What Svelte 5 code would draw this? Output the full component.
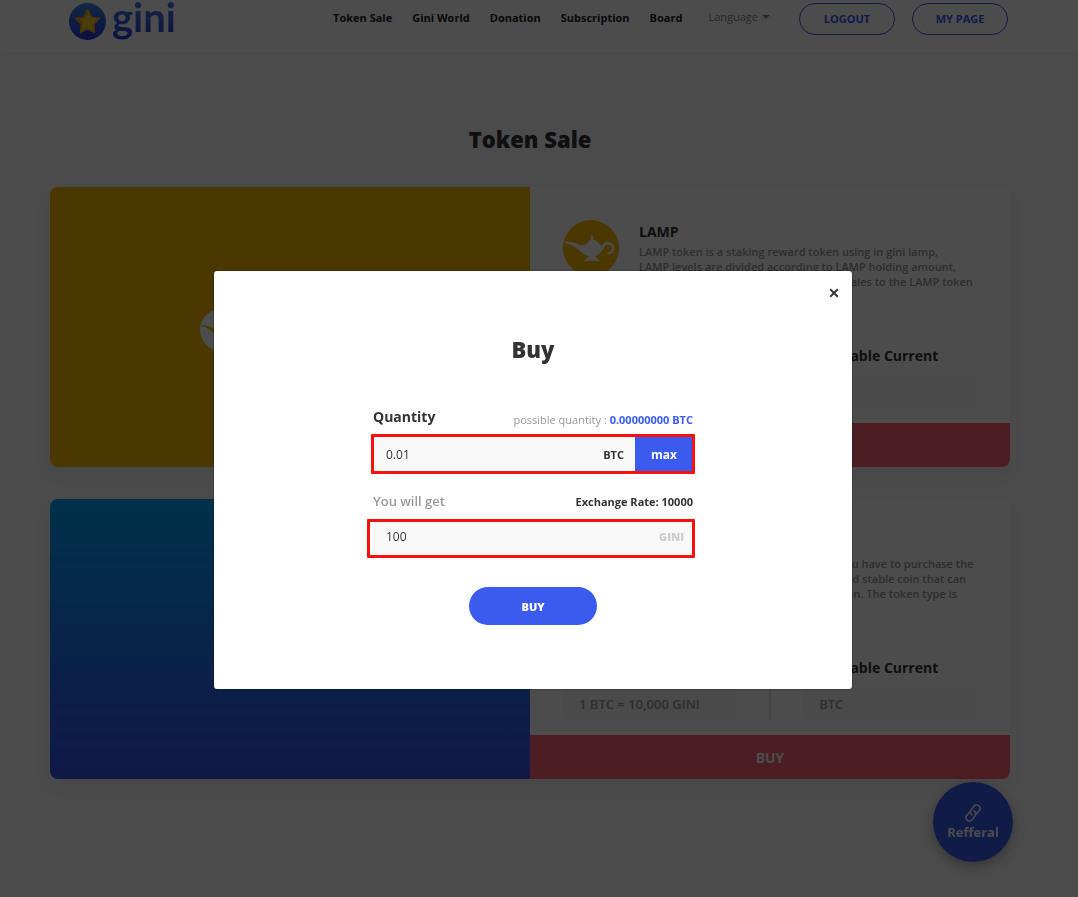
<script lang="ts">
    let quantity = "0.01";
    let willGet = "100";
    let showModal = true;

    const menu = ["Token Sale", "Gini World", "Donation", "Subscription", "Board"];

    const tokens = [
        {
            id: "lamp",
            name: "LAMP",
            lines: [
                "LAMP token is a staking reward token using in gini lamp,",
                "LAMP levels are divided according to LAMP holding amount,",
                "and we distribute profits for the token sales to the LAMP token",
            ],
            rate: "1 BTC = 100 LAMP",
            current: "",
        },
        {
            id: "gini",
            name: "GINI",
            lines: [
                "To use the services on the gini World, you have to purchase the",
                "GINI token. GINI is a safe, well traded and stable coin that can",
                "be used anywhere without any restriction. The token type is",
            ],
            rate: "1 BTC = 10,000 GINI",
            current: "BTC",
        },
    ];

    function setMax() {
        quantity = "0.00000000";
    }
</script>

{#snippet lamp()}
    <path d="M2 22c5-1 10 1 15 3 4 1 7-1 9-4l2-2c-1-2 0-4 1-4s2 2 1 4c4 2 6 4 9 7 1-4 4-5 7-4 4 1 6 4 5 7-1 4-4 6-7 5l1-2c3 0 4-2 4-4 0-3-3-4-5-3-3 1-3 4-6 7-2 2-4 3-6 4 1 2 3 2 5 5H21c2-3 4-3 5-5-9-2-12-11-24-13z" />
{/snippet}

{#snippet star()}
    <defs>
        <linearGradient id="ball" x1="0" y1="0" x2="0" y2="1">
            <stop offset="0" stop-color="#3a86e8" />
            <stop offset="1" stop-color="#2b35d8" />
        </linearGradient>
    </defs>
    <circle cx="19" cy="19" r="19" fill="url(#ball)" />
    <path d="M19 7l4 8 8 1-6 6 1 8-7-4-7 4 1-8-6-6 8-1z" fill="#f5d030" stroke="#e8b020" stroke-width="2" stroke-linejoin="round" />
    <path d="M19 8l-3 7-7 1 5 5" fill="none" stroke="#e89a20" stroke-width="2" stroke-linejoin="round" />
{/snippet}

<header>
    <div class="bar">
        <a class="logo" href="#home">
            <svg viewBox="0 0 38 38" aria-hidden="true">{@render star()}</svg>
            <span>gini</span>
        </a>
        <nav>
            {#each menu as item}
                <a href="#menu">{item}</a>
            {/each}
        </nav>
        <button class="language">Language<i></i></button>
        <div class="account">
            <button>LOGOUT</button>
            <button>MY PAGE</button>
        </div>
    </div>
</header>

<main>
    <h1>Token Sale</h1>
    {#each tokens as token}
        <section class="card">
            <div class="banner {token.id}">
                {#if token.id == "lamp"}
                    <div class="brand">
                        <svg viewBox="0 0 56 56" aria-hidden="true">
                            <circle cx="28" cy="28" r="28" fill="#fff" />
                            <g fill="#fab700">{@render lamp()}</g>
                        </svg>
                        <b>gini lamp</b>
                    </div>
                {/if}
            </div>
            <div class="info">
                <div class="detail">
                    <div class="about">
                        <svg viewBox="0 0 56 56" aria-hidden="true">
                            {#if token.id == "lamp"}
                                <circle cx="28" cy="28" r="28" fill="#fab700" />
                                <g fill="#fff">{@render lamp()}</g>
                            {:else}
                                <circle cx="28" cy="28" r="28" fill="#3a5bee" />
                            {/if}
                        </svg>
                        <div>
                            <h2>{token.name}</h2>
                            <p>
                                {#each token.lines as line}
                                    <span>{line}</span>
                                {/each}
                            </p>
                        </div>
                    </div>
                    <div class="facts">
                        <div>
                            <h3>Token Price</h3>
                            <p>{token.rate}</p>
                        </div>
                        <hr>
                        <div>
                            <h3>Acceptable Current</h3>
                            <p>{token.current}</p>
                        </div>
                    </div>
                </div>
                <button class="buy">BUY</button>
            </div>
        </section>
    {/each}
</main>

<button class="refferal">
    <svg viewBox="0 0 18 18" aria-hidden="true">
        <path d="M8 11c-2-1-2-4-1-5l3-4c2-2 4-1 5 0s2 3 0 5l-3 3M10 7c2 1 2 4 1 5l-3 4c-2 2-4 1-5 0s-2-3 0-5l3-3" />
    </svg>
    Refferal
</button>

{#if showModal}
    <div class="overlay">
        <div class="modal" role="dialog" aria-labelledby="buy-title">
            <button class="close" aria-label="Close" on:click={() => (showModal = false)}>
                <svg viewBox="0 0 8 8" aria-hidden="true"><path d="M1 1l6 6M7 1l-6 6" /></svg>
            </button>
            <h2 id="buy-title">Buy</h2>
            <form on:submit|preventDefault>
                <div class="caption">
                    <label class="main-label" for="quantity">Quantity</label>
                    <span class="possible">possible quantity : <b>0.00000000 BTC</b></span>
                </div>
                <div class="field">
                    <input id="quantity" type="text" bind:value={quantity}>
                    <span class="unit">BTC</span>
                    <button type="button" class="max" on:click={setMax}>max</button>
                </div>
                <div class="caption second">
                    <label for="get">You will get</label>
                    <b class="rate">Exchange Rate: 10000</b>
                </div>
                <div class="field get">
                    <input id="get" type="text" bind:value={willGet}>
                    <span class="unit">GINI</span>
                </div>
                <button class="submit">BUY</button>
            </form>
        </div>
    </div>
{/if}

<style>
    :global(body) {
        background: #fafafa;
        color: #333;
        font-family: "Open Sans", sans-serif;
        font-size: 12px;
    }
    h1, h2, h3, p {
        margin: 0;
    }
    button, input {
        font-family: inherit;
        border: 0;
        padding: 0;
    }
    button {
        cursor: pointer;
    }
    a {
        color: inherit;
        text-decoration: none;
    }
    svg {
        display: block;
        flex: none;
    }
    header {
        background: #fff;
        height: 52px;
        box-shadow: 0 1px 4px rgba(0, 0, 0, 0.03);
    }
    .bar {
        display: flex;
        align-items: flex-start;
        box-sizing: border-box;
        max-width: 940px;
        margin: 0 auto;
        padding-right: 1px;
    }
    .logo {
        display: flex;
        gap: 6px;
        margin-right: auto;
    }
    .logo svg {
        width: 37px;
        height: 37px;
        margin-top: 3px;
    }
    .logo span {
        font-family: Lato, sans-serif;
        font-size: 40px;
        font-weight: bold;
        line-height: 34px;
        padding-bottom: 10px;
        color: transparent;
        background: linear-gradient(#3a86e8, #2b35d8);
        background-clip: text;
    }
    nav {
        display: flex;
        gap: 20px;
        padding-top: 3px;
        font-size: 11px;
        font-weight: bold;
        line-height: 30px;
        color: #222;
    }
    .language {
        display: flex;
        align-items: center;
        gap: 4px;
        margin: 3px 29px 0 26px;
        background: none;
        color: #888;
        font-size: 11px;
        line-height: 28px;
    }
    .language i {
        border: 4px solid transparent;
        border-top-color: #888;
        border-bottom: 0;
    }
    .account {
        display: flex;
        gap: 17px;
        padding-top: 3px;
    }
    .account button {
        box-sizing: border-box;
        width: 96px;
        height: 32px;
        padding-bottom: 2px;
        border: 1px solid #3a5bee;
        border-radius: 16px;
        background: none;
        color: #3a5bee;
        font-size: 11px;
        font-weight: bold;
    }
    main {
        display: flex;
        flex-direction: column;
        align-items: center;
        gap: 32px;
        padding: 72px 68px 80px 50px;
    }
    h1 {
        font-size: 22px;
        font-weight: 800;
        line-height: 31px;
    }
    .card {
        display: grid;
        grid-template-columns: 1fr 1fr;
        width: 100%;
        max-width: 960px;
        min-height: 280px;
        border-radius: 8px;
        overflow: hidden;
        background: #fff;
        box-shadow: 0 8px 16px rgba(0, 0, 0, 0.05);
    }
    .banner {
        display: flex;
        align-items: center;
        justify-content: center;
    }
    .banner.lamp {
        background: #fab700;
    }
    .banner.gini {
        background: linear-gradient(#00a4f8, #3a50f0);
    }
    .brand {
        display: flex;
        align-items: center;
        gap: 12px;
        width: 180px;
        color: #fff;
        font-size: 24px;
        padding-top: 6px;
    }
    .brand svg {
        width: 42px;
        height: 42px;
    }
    .info {
        display: flex;
        flex-direction: column;
    }
    .detail {
        display: flex;
        flex: 1;
        flex-direction: column;
        justify-content: space-between;
        padding: 33px 33px 15px;
    }
    .about {
        display: flex;
        gap: 20px;
    }
    .about svg {
        width: 56px;
        height: 56px;
    }
    .about h2 {
        font-size: 14px;
        line-height: 24px;
    }
    .about p {
        color: #999;
        font-size: 11px;
        font-weight: 600;
        line-height: 15px;
    }
    .about span {
        display: block;
        white-space: nowrap;
    }
    .facts {
        display: flex;
        justify-content: space-between;
    }
    .facts div {
        width: 42%;
    }
    .facts h3 {
        font-size: 14px;
        line-height: 20px;
        padding-bottom: 10px;
        white-space: nowrap;
    }
    .facts p {
        box-sizing: border-box;
        height: 32px;
        padding: 0 16px;
        border-radius: 4px;
        background: #f8f8f8;
        color: #999;
        font-size: 13px;
        font-weight: 600;
        line-height: 32px;
    }
    .facts hr {
        width: 2px;
        margin: 0;
        border: 0;
        background: #e5e5e5;
    }
    .buy {
        height: 44px;
        background: #ff6175;
        color: #fff;
        font-size: 14px;
        font-weight: bold;
    }
    .refferal {
        position: fixed;
        right: 65px;
        bottom: 35px;
        display: flex;
        flex-direction: column;
        align-items: center;
        justify-content: center;
        gap: 1px;
        width: 80px;
        height: 80px;
        border-radius: 50%;
        background: #3a5bee;
        color: #fff;
        font-size: 13px;
        font-weight: bold;
        box-shadow: 0 4px 12px rgba(0, 0, 0, 0.3);
    }
    .refferal svg {
        width: 18px;
        height: 18px;
        fill: none;
        stroke: #fff;
        stroke-width: 1.5;
        stroke-linecap: round;
    }
    .overlay {
        position: fixed;
        inset: 0;
        display: flex;
        align-items: flex-start;
        justify-content: center;
        padding: 271px 12px 0 0;
        background: rgba(0, 0, 0, 0.7);
    }
    .modal {
        position: relative;
        box-sizing: border-box;
        width: 100%;
        max-width: 638px;
        padding: 63px 24px 64px;
        border-radius: 3px;
        background: #fff;
        box-shadow: 0 0 2px rgba(0, 0, 0, 0.6);
    }
    .close {
        position: absolute;
        top: 14px;
        right: 10px;
        display: grid;
        place-items: center;
        width: 16px;
        height: 16px;
        background: none;
    }
    .close svg {
        width: 10px;
        height: 10px;
        stroke: #333;
        stroke-width: 1.5;
    }
    .modal h2 {
        font-size: 22px;
        font-weight: 800;
        line-height: 30px;
        text-align: center;
    }
    form {
        max-width: 320px;
        margin: 42px auto 0;
    }
    .caption {
        display: flex;
        justify-content: space-between;
        align-items: center;
        height: 20px;
        color: #999;
        font-size: 11px;
    }
    .caption label {
        font-size: 13px;
        font-weight: 600;
    }
    .caption .main-label {
        color: #333;
        font-size: 14px;
        font-weight: bold;
    }
    .possible {
        padding-top: 6px;
    }
    .possible b {
        color: #3a5bee;
    }
    .rate {
        color: #333;
    }
    .second {
        margin-top: 18px;
    }
    .field {
        position: relative;
        display: flex;
        align-items: center;
        height: 38px;
        margin-top: 9px;
        background: #f8f8f8;
    }
    .field::after {
        content: "";
        position: absolute;
        inset: -1px -2px;
        border: 3px solid #fa100c;
        border-radius: 1px;
        pointer-events: none;
    }
    .field.get {
        box-sizing: border-box;
        height: 37px;
        padding-bottom: 4px;
    }
    .field.get::after {
        left: -6px;
    }
    .field input {
        flex: 1;
        min-width: 0;
        padding-left: 13px;
        background: none;
        color: #333;
        font-size: 12px;
        outline: 0;
    }
    .unit {
        padding-right: 11px;
        font-size: 11px;
        font-weight: bold;
    }
    .get .unit {
        padding-right: 9px;
        color: #ccc;
        font-weight: 800;
    }
    .max {
        width: 58px;
        height: 38px;
        background: #3a5bee;
        color: #fff;
        font-size: 12px;
        font-weight: bold;
    }
    .submit {
        display: block;
        width: 128px;
        height: 38px;
        margin: 30px auto 0;
        border-radius: 19px;
        background: #3a5bee;
        color: #fff;
        font-size: 11px;
        font-weight: 800;
    }
</style>
